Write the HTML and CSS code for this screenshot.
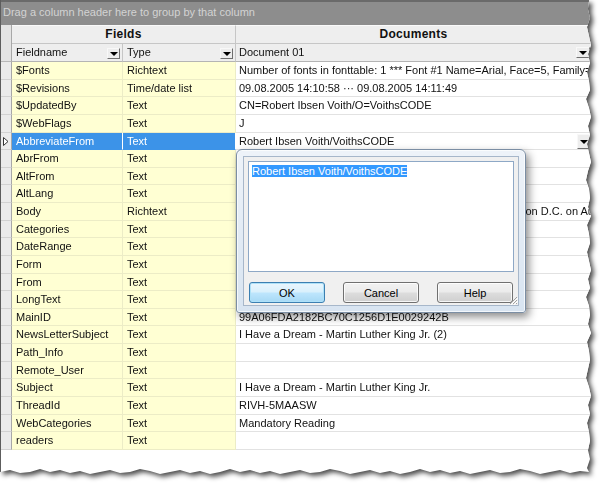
FILE: index.html
```html
<!DOCTYPE html>
<html lang="en">
<head>
    <meta charset="UTF-8">
    <title>Document Fields</title>
    <link rel="stylesheet" href="styles.css">
</head>
<body>
    <div class="sheet">
        <div class="paper">
            <div class="group-panel">Drag a column header here to group by that column</div>

            <!-- Column headers -->
            <div class="grid-head">
                <div class="corner"></div>
                <div class="band band-fields">Fields</div>
                <div class="band band-docs">Documents</div>
                <div class="col-head">Fieldname<span class="drop"></span></div>
                <div class="col-head">Type<span class="drop"></span></div>
                <div class="col-head col-doc">Document 01<span class="drop"></span></div>
            </div>

            <!-- Rows -->
            <div class="rows">
                <div class="row"><div class="ind"></div><div class="cell fld">$Fonts</div><div class="cell fld">Richtext</div><div class="cell doc">Number of fonts in fonttable: 1 *** Font #1 Name=Arial, Face=5, Family=</div></div>
                <div class="row"><div class="ind"></div><div class="cell fld">$Revisions</div><div class="cell fld">Time/date list</div><div class="cell doc">09.08.2005 14:10:58 ··· 09.08.2005 14:11:49</div></div>
                <div class="row"><div class="ind"></div><div class="cell fld">$UpdatedBy</div><div class="cell fld">Text</div><div class="cell doc">CN=Robert Ibsen Voith/O=VoithsCODE</div></div>
                <div class="row"><div class="ind"></div><div class="cell fld">$WebFlags</div><div class="cell fld">Text</div><div class="cell doc">J</div></div>
                <div class="row sel">
                    <div class="ind"><svg width="6" height="9" viewBox="0 0 6 9"><polygon points="0.5,0.5 5,4.5 0.5,8.5" fill="#fff" stroke="#333" stroke-width="1"/></svg></div>
                    <div class="cell fld">AbbreviateFrom</div><div class="cell fld">Text</div>
                    <div class="cell doc">Robert Ibsen Voith/VoithsCODE<span class="drop drop-full"></span></div>
                </div>
                <div class="row"><div class="ind"></div><div class="cell fld">AbrFrom</div><div class="cell fld">Text</div><div class="cell doc"></div></div>
                <div class="row"><div class="ind"></div><div class="cell fld">AltFrom</div><div class="cell fld">Text</div><div class="cell doc"></div></div>
                <div class="row"><div class="ind"></div><div class="cell fld">AltLang</div><div class="cell fld">Text</div><div class="cell doc"></div></div>
                <div class="row"><div class="ind"></div><div class="cell fld">Body</div><div class="cell fld">Richtext</div><div class="cell doc body-text">Washington D.C. on August 28, 1963</div></div>
                <div class="row"><div class="ind"></div><div class="cell fld">Categories</div><div class="cell fld">Text</div><div class="cell doc"></div></div>
                <div class="row"><div class="ind"></div><div class="cell fld">DateRange</div><div class="cell fld">Text</div><div class="cell doc"></div></div>
                <div class="row"><div class="ind"></div><div class="cell fld">Form</div><div class="cell fld">Text</div><div class="cell doc"></div></div>
                <div class="row"><div class="ind"></div><div class="cell fld">From</div><div class="cell fld">Text</div><div class="cell doc"></div></div>
                <div class="row"><div class="ind"></div><div class="cell fld">LongText</div><div class="cell fld">Text</div><div class="cell doc"></div></div>
                <div class="row"><div class="ind"></div><div class="cell fld">MainID</div><div class="cell fld">Text</div><div class="cell doc">99A06FDA2182BC70C1256D1E0029242B</div></div>
                <div class="row"><div class="ind"></div><div class="cell fld">NewsLetterSubject</div><div class="cell fld">Text</div><div class="cell doc">I Have a Dream - Martin Luther King Jr. (2)</div></div>
                <div class="row"><div class="ind"></div><div class="cell fld">Path_Info</div><div class="cell fld">Text</div><div class="cell doc"></div></div>
                <div class="row"><div class="ind"></div><div class="cell fld">Remote_User</div><div class="cell fld">Text</div><div class="cell doc"></div></div>
                <div class="row"><div class="ind"></div><div class="cell fld">Subject</div><div class="cell fld">Text</div><div class="cell doc">I Have a Dream - Martin Luther King Jr.</div></div>
                <div class="row"><div class="ind"></div><div class="cell fld">ThreadId</div><div class="cell fld">Text</div><div class="cell doc">RIVH-5MAASW</div></div>
                <div class="row"><div class="ind"></div><div class="cell fld">WebCategories</div><div class="cell fld">Text</div><div class="cell doc">Mandatory Reading</div></div>
                <div class="row"><div class="ind"></div><div class="cell fld">readers</div><div class="cell fld">Text</div><div class="cell doc"></div></div>
            </div>

            <!-- Edit dialog -->
            <div class="dialog">
                <div class="dialog-body">
                    <div class="edit-box"><span class="selected">Robert Ibsen Voith/VoithsCODE</span></div>
                    <div class="buttons">
                        <button class="btn btn-default">OK</button>
                        <button class="btn">Cancel</button>
                        <button class="btn">Help</button>
                    </div>
                    <svg class="grip" width="9" height="9" viewBox="0 0 9 9">
                        <path d="M8 1 L1 8 M8 4 L4 8 M8 7 L7 8" stroke="#a0a0a0" stroke-width="1"/>
                        <path d="M9 2 L2 9 M9 5 L5 9" stroke="#fff" stroke-width="1"/>
                    </svg>
                </div>
            </div>
        </div>
    </div>
</body>
</html>
```

FILE: styles.css
```css
* {
    box-sizing: border-box;
}
body {
    margin: 0;
    background: #fff;
    font-family: "Liberation Sans", Arial, sans-serif;
    font-size: 11px;
    color: #111;
    overflow: hidden;
}
.sheet {
    width: 600px;
    height: 484px;
    filter: drop-shadow(3px 3px 2.5px rgba(0,0,0,0.7));
}
.paper {
    position: relative;
    width: 592px;
    height: 476px;
    background: #fff;
    border-left: 1px solid #5d5d5d;
    clip-path: polygon(0 0, 589px 0, 588px 9px, 590px 18px, 587px 27px, 589px 36px, 591px 45px, 588px 54px, 590px 63px, 587px 72px, 589px 81px, 590px 90px, 586px 99px, 589px 108px, 591px 117px, 588px 126px, 590px 135px, 587px 144px, 589px 153px, 591px 162px, 588px 171px, 586px 180px, 589px 189px, 590px 198px, 588px 207px, 591px 216px, 587px 225px, 589px 234px, 590px 243px, 587px 252px, 589px 261px, 591px 270px, 588px 279px, 590px 288px, 586px 297px, 589px 306px, 590px 315px, 588px 324px, 591px 333px, 587px 342px, 589px 351px, 590px 360px, 588px 369px, 586px 378px, 589px 387px, 591px 396px, 588px 405px, 590px 414px, 587px 423px, 589px 432px, 590px 441px, 588px 450px, 590px 459px, 587px 468px, 589px 472px,
        580px 471px, 570px 473px, 560px 470px, 550px 472px, 540px 474px, 530px 471px, 520px 469px, 510px 472px, 500px 473px, 490px 470px, 480px 472px, 470px 474px, 460px 471px, 450px 473px, 440px 470px, 430px 472px, 420px 469px, 410px 472px, 400px 474px, 390px 471px, 380px 473px, 370px 470px, 360px 472px, 350px 474px, 340px 471px, 330px 469px, 320px 472px, 310px 473px, 300px 470px, 290px 472px, 280px 474px, 270px 471px, 260px 473px, 250px 470px, 240px 472px, 230px 469px, 220px 472px, 210px 474px, 200px 471px, 190px 473px, 180px 470px, 170px 472px, 160px 474px, 150px 471px, 140px 469px, 130px 472px, 120px 473px, 110px 470px, 100px 472px, 90px 474px, 80px 471px, 70px 473px, 60px 470px, 50px 472px, 40px 469px, 30px 472px, 20px 473px, 10px 470px, 0 472px);
}

/* group-by panel */
.group-panel {
    height: 25px;
    border-top: 2px solid #6a6a6a;
    background: #8d8d8d;
    color: #d3d3d3;
    padding: 3px 0 0 2px;
    line-height: 15px;
}

/* header */
.grid-head {
    display: grid;
    grid-template-columns: 11px 111px 113px 1fr;
    grid-template-rows: 19px 18px;
    background: #eeeeee;
}
.corner {
    grid-row: 1 / 3;
    background: #e4e4e4;
    border-right: 1px solid #a8a8a8;
    border-bottom: 1px solid #b8b8b8;
}
.band {
    font-weight: bold;
    font-size: 12px;
    letter-spacing: 0.3px;
    text-align: center;
    line-height: 17px;
    border-top: 1px solid #fafafa;
    border-right: 1px solid #c6c6c6;
    border-bottom: 1px solid #c6c6c6;
}
.band-fields {
    grid-column: 2 / 4;
}
.col-head {
    position: relative;
    padding-left: 4px;
    line-height: 17px;
    border-right: 1px solid #c6c6c6;
    border-bottom: 1px solid #b4b4b4;
}
.col-doc {
    padding-left: 3px;
}
.drop {
    position: absolute;
    right: 2px;
    top: 4px;
    width: 13px;
    height: 11px;
    background: #ededed;
    border: 1px solid;
    border-color: #f8f8f8 #6f6f6f #6f6f6f #f8f8f8;
}
.drop::after {
    content: "";
    position: absolute;
    left: 2px;
    top: 3px;
    border-left: 4px solid transparent;
    border-right: 4px solid transparent;
    border-top: 4px solid #000;
}
.col-doc .drop {
    right: 1px;
    top: 3px;
    width: 14px;
}

/* rows */
.row {
    display: grid;
    grid-template-columns: 11px 111px 113px 1fr;
    height: 17.64px;
}
.ind {
    background: #ebebeb;
    border-right: 1px solid #a8a8a8;
    border-bottom: 1px solid #d2d2d2;
    padding: 4px 0 0 2px;
}
.ind svg {
    display: block;
}
.cell {
    padding-left: 4px;
    line-height: 16.6px;
    white-space: nowrap;
    overflow: hidden;
    border-bottom: 1px solid #e2e2e2;
}
.fld {
    background: #ffffd3;
    border-bottom-color: #ececc6;
    border-right: 1px solid #ececc6;
}
.doc {
    position: relative;
    padding-left: 3px;
    background: #fff;
}
/* the start of the body text lies under the dialog */
.body-text {
    padding-left: 244px;
}
.sel .fld {
    background: #3c93e8;
    color: #fff;
    border-right-color: #fff;
    border-bottom-color: #3c93e8;
}
.drop-full {
    right: 1px;
    top: 1px;
    width: 14px;
    height: 15px;
}
.drop-full::after {
    top: 5px;
}

/* dialog */
.dialog {
    position: absolute;
    left: 235px;
    top: 149px;
    width: 290px;
    height: 164px;
    padding: 6px;
    border: 1px solid #7b8ea4;
    border-radius: 6px 6px 3px 3px;
    background: linear-gradient(#eef3f9, #d8e4f1);
    box-shadow: 3px 4px 8px rgba(0,0,0,0.45), inset 0 0 0 1px rgba(255,255,255,0.7);
}
.dialog-body {
    position: relative;
    height: 100%;
    padding: 4px 4px 0 4px;
    background: #f0f0f0;
    border: 1px solid #a7b7ca;
}
.edit-box {
    height: 111px;
    padding: 3px;
    background: #fff;
    border: 1px solid #8ea8c6;
    line-height: 12px;
}
.selected {
    background: #3399ff;
    color: #fff;
}
.buttons {
    display: flex;
    gap: 18px;
    margin-top: 10px;
    padding-left: 1px;
}
.btn {
    width: 76px;
    height: 21px;
    padding: 0;
    font-family: "Liberation Sans", Arial, sans-serif;
    font-size: 11px;
    color: #000;
    border: 1px solid #707070;
    border-radius: 3px;
    background: linear-gradient(#f2f2f2 0%, #ebebeb 48%, #dddddd 52%, #cfcfcf 100%);
    box-shadow: inset 0 0 0 1px rgba(255,255,255,0.8);
}
.btn-default {
    border-color: #3c7fb1;
    background: linear-gradient(#eaf6fd 0%, #d9f0fc 48%, #bee6fd 52%, #a7d9f5 100%);
    box-shadow: inset 0 0 0 1px #aee1f8;
}
.grip {
    position: absolute;
    right: 0;
    bottom: 0;
}
```
